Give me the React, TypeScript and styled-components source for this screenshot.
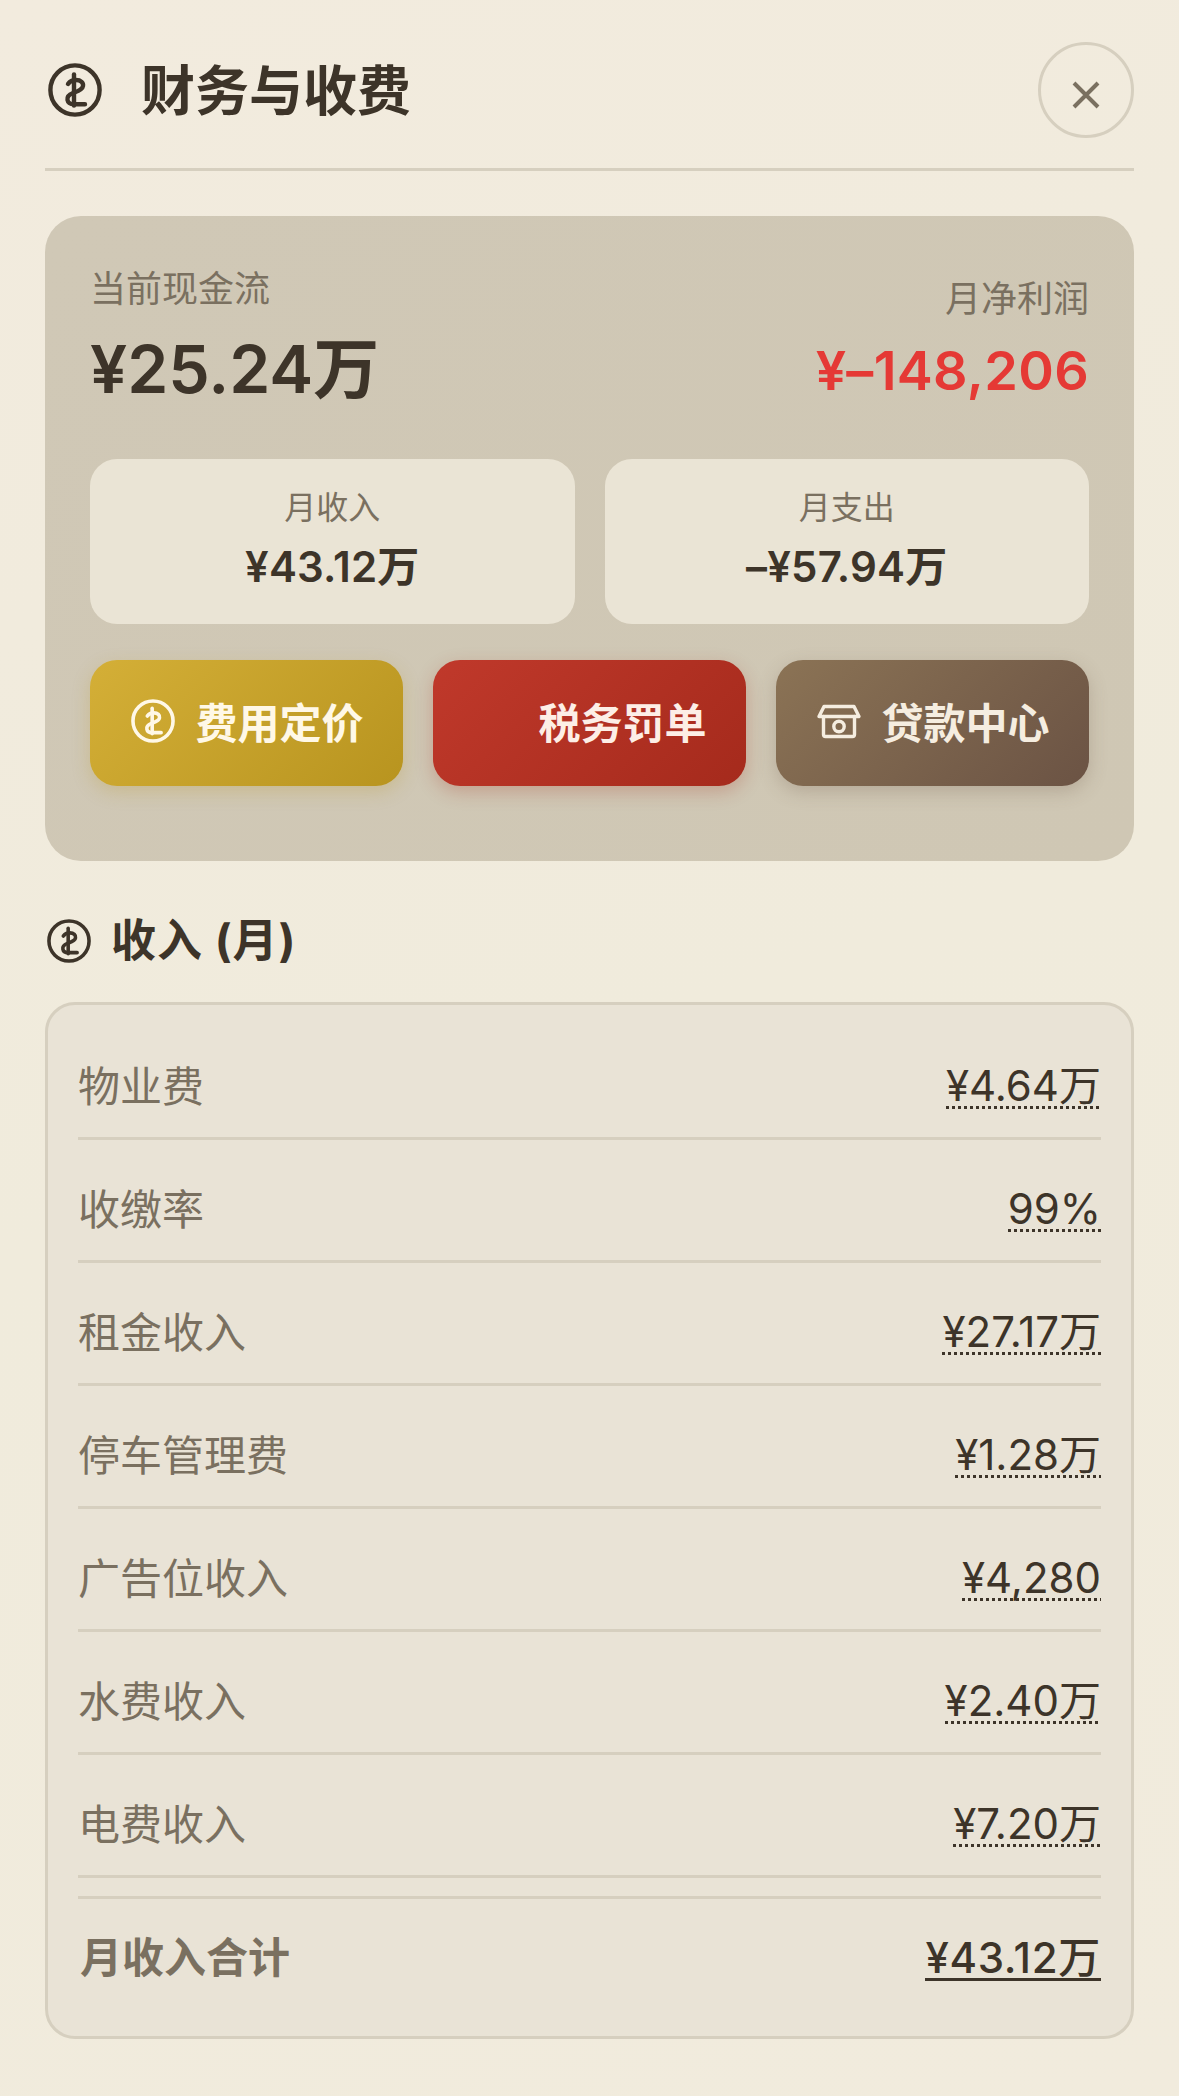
import React from "react";
import styled, { createGlobalStyle } from "styled-components";

const GlobalStyle = createGlobalStyle`
  html, body { margin: 0; padding: 0; }
  body {
    background: #f1ebdd;
    font-family: Inter, "Noto Sans CJK SC", "Noto Sans", sans-serif;
    color: #3d3429;
  }
  * { box-sizing: border-box; }
`;

const Page = styled.div`
  width: 1179px;
  height: 2096px;
  padding: 42px 45px 0;
  background: linear-gradient(160deg, #f2ebde 0%, #f0ebdc 50%, #f1ebdd 100%);
  overflow: hidden;
`;

const Header = styled.header`
  display: flex;
  align-items: center;
  justify-content: space-between;
  padding-bottom: 30px;
  border-bottom: 3px solid #d6cfbf;
  margin-bottom: 45px;
`;

const TitleGroup = styled.div`
  display: flex;
  align-items: center;
  gap: 39px;
  padding-left: 3px;
`;

const Title = styled.h1`
  margin: 4px 0 0;
  font-size: 54px;
  line-height: 72px;
  font-weight: 700;
  color: #3d3429;
`;

const CloseButton = styled.button`
  width: 96px;
  height: 96px;
  padding: 9px 0 0;
  border: 3px solid #d6cfbf;
  border-radius: 50%;
  background: transparent;
  color: #7a7060;
  display: flex;
  align-items: center;
  justify-content: center;
`;

const SummaryCard = styled.section`
  padding: 45px 45px 75px;
  border-radius: 36px;
  background: linear-gradient(135deg, #d0c8b6 0%, #cfc7b4 100%);
`;

const SummaryTop = styled.div`
  display: flex;
  align-items: center;
  justify-content: space-between;
  margin-bottom: 45px;
`;

const CashColumn = styled.div`
  display: flex;
  flex-direction: column;
  gap: 9px;
  padding-top: 3px;
`;

const ProfitColumn = styled.div`
  display: flex;
  flex-direction: column;
  align-items: flex-end;
  gap: 10px;
  padding-top: 6px;
`;

const SmallLabel = styled.div`
  font-size: 36px;
  line-height: 51px;
  color: #7a7060;
`;

const CashValue = styled.div`
  font-size: 66px;
  line-height: 90px;
  font-weight: 600;
  color: #3d3429;
`;

const ProfitValue = styled.div`
  font-size: 54px;
  line-height: 72px;
  font-weight: 600;
  letter-spacing: 0.3px;
  color: #e53935;
`;

const StatGrid = styled.div`
  display: grid;
  grid-template-columns: 1fr 1fr;
  gap: 30px;
  margin-bottom: 36px;
`;

const StatBox = styled.div`
  height: 165px;
  border-radius: 27px;
  background: #eae4d5;
  display: flex;
  flex-direction: column;
  align-items: center;
  padding-top: 25px;
  gap: 5px;
`;

const StatLabel = styled.div`
  font-size: 32px;
  line-height: 48px;
  color: #7a7060;
`;

const StatValue = styled.div`
  font-size: 42px;
  line-height: 60px;
  font-weight: 600;
  letter-spacing: 0.2px;
  color: #3d3429;
`;

const ActionGrid = styled.div`
  display: grid;
  grid-template-columns: repeat(3, 1fr);
  gap: 30px;
`;

const ActionButton = styled.button<{ $from: string; $to: string; $ink: string; $shadow: string }>`
  height: 126px;
  border: 0;
  border-radius: 27px;
  padding: 2px 0 0;
  display: flex;
  align-items: center;
  justify-content: center;
  gap: 18px;
  font-family: inherit;
  font-size: 42px;
  line-height: 60px;
  font-weight: 700;
  color: ${(p) => p.$ink};
  background: linear-gradient(135deg, ${(p) => p.$from} 0%, ${(p) => p.$to} 100%);
  box-shadow: 0 6px 18px ${(p) => p.$shadow};
`;

const ActionIcon = styled.span`
  width: 48px;
  height: 48px;
  display: flex;
  align-items: center;
  justify-content: center;
  margin-top: -7px;
`;

const SectionHeader = styled.div`
  display: flex;
  align-items: center;
  gap: 20px;
  height: 60px;
  margin: 50px 0 31px;
  padding-left: 2px;
`;

const SectionTitle = styled.h2`
  margin: 0;
  font-size: 45px;
  line-height: 60px;
  font-weight: 700;
  letter-spacing: 1px;
  color: #3d3429;
`;

const IncomeCard = styled.section`
  height: 1037px;
  padding: 12px 30px;
  border: 3px solid #d6cfbf;
  border-radius: 30px;
  background: #e9e3d6;
`;

const Row = styled.div`
  height: 123px;
  padding-top: 45px;
  display: flex;
  align-items: flex-start;
  justify-content: space-between;
  border-bottom: 3px solid #d6cfbf;
`;

const RowLabel = styled.span`
  font-size: 42px;
  line-height: 48px;
  margin-top: 1px;
  color: #7a7060;
`;

const RowValue = styled.span`
  font-size: 42px;
  line-height: 46px;
  font-weight: 400;
  color: #3d3429;
  background-image: linear-gradient(to right, #3d3429 50%, transparent 50%);
  background-size: 6px 3px;
  background-repeat: repeat-x;
  background-position: left bottom;
  margin-top: 1px;
`;

const TotalRow = styled.div`
  margin-top: 18px;
  border-top: 3px solid #d6cfbf;
  padding: 39px 0 0 2px;
  display: flex;
  align-items: flex-start;
  justify-content: space-between;
`;

const TotalLabel = styled.span`
  font-size: 42px;
  line-height: 40px;
  font-weight: 700;
  color: #7a7060;
`;

const TotalValue = styled.span`
  font-size: 42px;
  line-height: 40px;
  font-weight: 500;
  letter-spacing: 0.7px;
  color: #3d3429;
  border-bottom: 3px solid #3d3429;
`;

const CoinIcon = ({ size }: { size: number }) => (
  <svg width={size} height={size} viewBox="0 0 54 54" fill="none" stroke="currentColor" strokeWidth="4.4" strokeLinecap="round" strokeLinejoin="round">
    <circle cx="27" cy="27" r="24.6" />
    <path d="M26 11.5V42.5" />
    <path d="M20 21C22 18 25 17 28 17C33 17 35.5 20 35 23C34.5 27 29 28.5 25 30C21 31.5 19 34 19.5 37C20 40 23 41.3 26 41.3H37" />
  </svg>
);

const StoreIcon = () => (
  <svg width="48" height="40" viewBox="6 5 48 40" fill="none" stroke="currentColor" strokeWidth="3.4" strokeLinecap="round" strokeLinejoin="round">
    <path d="M10 20.5L15 10.5H45L50 20.5Z" />
    <path d="M14.5 20.5V38.5A2 2 0 0 0 16.5 40.5H43.5A2 2 0 0 0 45.5 38.5V20.5" />
    <circle cx="30" cy="30.5" r="5.2" />
  </svg>
);

const CloseIcon = () => (
  <svg width="28" height="28" viewBox="0 0 28 28" fill="none" stroke="currentColor" strokeWidth="4">
    <path d="M2 2L26 26M26 2L2 26" />
  </svg>
);

const rows: [string, string][] = [
  ["物业费", "¥4.64万"],
  ["收缴率", "99%"],
  ["租金收入", "¥27.17万"],
  ["停车管理费", "¥1.28万"],
  ["广告位收入", "¥4,280"],
  ["水费收入", "¥2.40万"],
  ["电费收入", "¥7.20万"],
];

export default function App() {
  return (
    <Page>
      <GlobalStyle />
      <Header>
        <TitleGroup>
          <CoinIcon size={54} />
          <Title>财务与收费</Title>
        </TitleGroup>
        <CloseButton aria-label="关闭">
          <CloseIcon />
        </CloseButton>
      </Header>

      <SummaryCard>
        <SummaryTop>
          <CashColumn>
            <SmallLabel>当前现金流</SmallLabel>
            <CashValue>¥25.24万</CashValue>
          </CashColumn>
          <ProfitColumn>
            <SmallLabel>月净利润</SmallLabel>
            <ProfitValue>¥–148,206</ProfitValue>
          </ProfitColumn>
        </SummaryTop>

        <StatGrid>
          <StatBox>
            <StatLabel>月收入</StatLabel>
            <StatValue>¥43.12万</StatValue>
          </StatBox>
          <StatBox>
            <StatLabel>月支出</StatLabel>
            <StatValue>–¥57.94万</StatValue>
          </StatBox>
        </StatGrid>

        <ActionGrid>
          <ActionButton $from="#d4af37" $to="#b8941f" $ink="#fff8e7" $shadow="rgba(184,148,31,0.25)">
            <ActionIcon>
              <CoinIcon size={44} />
            </ActionIcon>
            费用定价
          </ActionButton>
          <ActionButton $from="#c0392b" $to="#a52a1c" $ink="#fdeee6" $shadow="rgba(165,42,28,0.25)">
            <ActionIcon />
            税务罚单
          </ActionButton>
          <ActionButton $from="#8b7355" $to="#6b5344" $ink="#f5ede0" $shadow="rgba(107,83,68,0.25)">
            <ActionIcon>
              <StoreIcon />
            </ActionIcon>
            贷款中心
          </ActionButton>
        </ActionGrid>
      </SummaryCard>

      <SectionHeader>
        <CoinIcon size={44} />
        <SectionTitle>收入 (月)</SectionTitle>
      </SectionHeader>

      <IncomeCard>
        {rows.map(([label, value]) => (
          <Row key={label}>
            <RowLabel>{label}</RowLabel>
            <RowValue>{value}</RowValue>
          </Row>
        ))}
        <TotalRow>
          <TotalLabel>月收入合计</TotalLabel>
          <TotalValue>¥43.12万</TotalValue>
        </TotalRow>
      </IncomeCard>
    </Page>
  );
}
